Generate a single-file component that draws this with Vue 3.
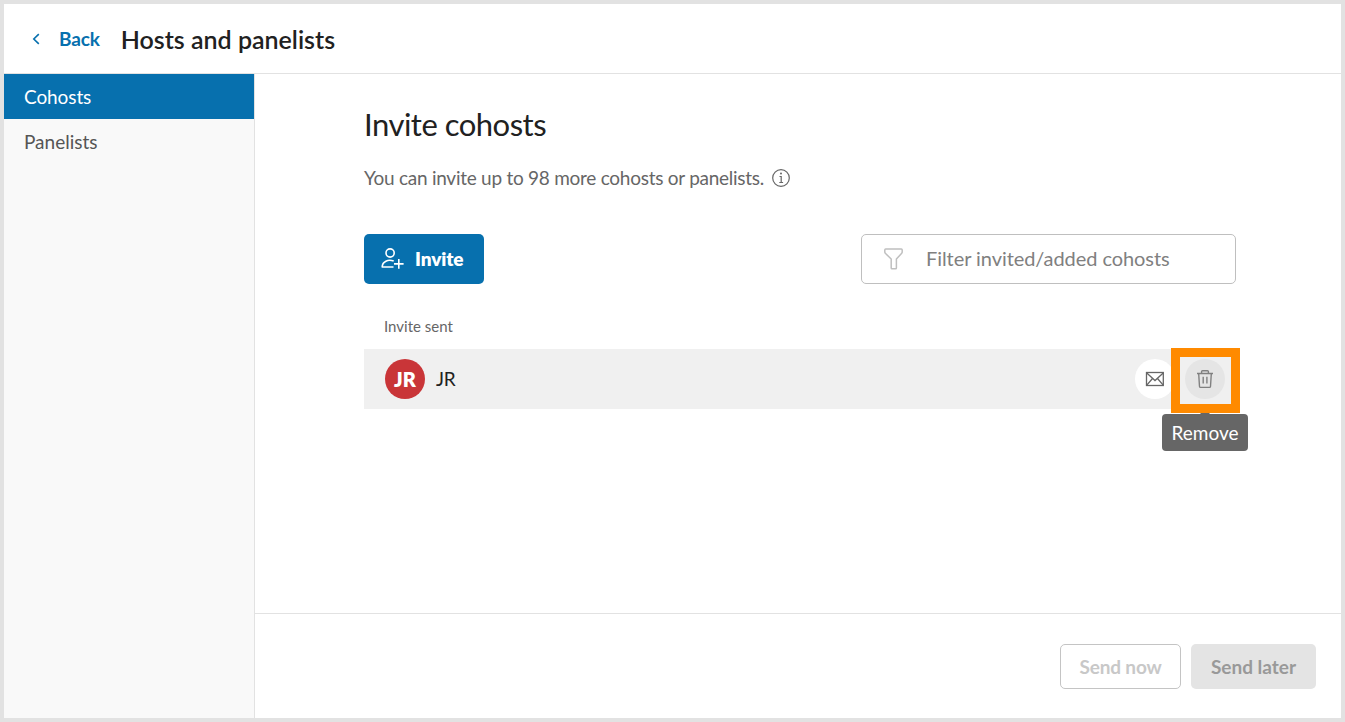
<template>
  <div class="window">
    <header class="header">
      <a class="back">
        <svg width="8" height="12" viewBox="0 0 8 12" fill="none" stroke="currentColor" stroke-width="1.6">
          <path d="M6.8 1.1 1.8 6l5 4.9" />
        </svg>
        <span>Back</span>
      </a>
      <h1 class="title">Hosts and panelists</h1>
    </header>

    <div class="body">
      <nav class="sidebar">
        <a
          v-for="tab in tabs"
          :key="tab"
          class="tab"
          :class="{ active: tab === activeTab }"
          @click="activeTab = tab"
        >{{ tab }}</a>
      </nav>

      <main class="main">
        <section class="content">
          <h2 class="heading">Invite cohosts</h2>
          <p class="hint">
            <span>You can invite up to {{ remaining }} more cohosts or panelists.</span>
            <svg width="18" height="18" viewBox="0 0 18 18" fill="none" stroke="currentColor" stroke-width="1.2">
              <circle cx="9" cy="9" r="8.3" />
              <path d="M7.5 7.5H9.2V13.5M7.3 13.5h3.8" />
              <circle cx="9" cy="4.5" r="1" fill="currentColor" stroke="none" />
            </svg>
          </p>

          <div class="toolbar">
            <button type="button" class="btn-invite">
              <svg width="23" height="22" viewBox="0 0 23 22" fill="none" stroke="currentColor" stroke-width="1.6">
                <circle cx="9.1" cy="5" r="4.1" />
                <path d="M12.7 13.1C7.2 11 1.2 13.4 1.2 19H12.5" stroke-linejoin="round" />
                <path d="M17.8 11v9.8M13 15.9h9.6" />
              </svg>
              <span>Invite</span>
            </button>
            <label class="filter">
              <svg width="19" height="22" viewBox="0 0 19 22" fill="none" stroke="currentColor" stroke-width="1.5" stroke-linejoin="round">
                <path d="M1.7 1h15.6q.9 0 .9.9v2.2q0 .7-.5 1.2L12.4 11v9q0 .8-.8.8H8q-.8 0-.8-.8v-9L1.3 5.3Q.8 4.8.8 4.1V1.9Q.8 1 1.7 1Z" />
              </svg>
              <input v-model="filter" type="text" placeholder="Filter invited/added cohosts" />
            </label>
          </div>

          <h3 class="list-title">Invite sent</h3>
          <div v-for="person in invited" :key="person.name" class="row">
            <span class="avatar">{{ person.initials }}</span>
            <span class="name">{{ person.name }}</span>
            <button type="button" class="icon-btn mail">
              <svg width="20" height="16" viewBox="0 0 20 16" fill="none" stroke="currentColor" stroke-width="1.3">
                <rect x="1.5" y="1.5" width="16.8" height="13" />
                <path d="M1.8 2 10 9.5 18.2 2M1.8 14.2 7.5 7.5M18.2 14.2l-5.7-6.7" />
              </svg>
            </button>
            <button type="button" class="icon-btn remove">
              <svg width="18" height="20" viewBox="0 0 18 20" fill="none" stroke="currentColor" stroke-width="1.4">
                <path d="M1 4.5h16M5.6 4.4V2.6q0-.9.9-.9h5q.9 0 .9.9v1.8M2.7 4.8l.8 12.7q.1.9 1 .9h9q.9 0 1-.9l.8-12.7M7.2 7.8v6.8M10.9 7.8v6.8" />
              </svg>
              <span class="tooltip">Remove</span>
              <span class="marker"></span>
            </button>
          </div>
        </section>

        <footer class="footer">
          <button type="button" class="btn btn-outline" disabled>Send now</button>
          <button type="button" class="btn btn-filled" disabled>Send later</button>
        </footer>
      </main>
    </div>
  </div>
</template>

<script setup>
import { ref } from 'vue'

const tabs = ['Cohosts', 'Panelists']
const activeTab = ref('Cohosts')
const remaining = ref(98)
const filter = ref('')
const invited = ref([{ name: 'JR', initials: 'JR' }])
</script>

<style>
body {
  margin: 0;
  overflow: hidden;
}
</style>

<style scoped>
* {
  box-sizing: border-box;
}

.window {
  display: flex;
  flex-direction: column;
  height: 722px;
  border: 4px solid #e2e2e2;
  background: #fff;
  color: #212121;
  font-family: Lato, "Liberation Sans", sans-serif;
  font-size: 19px;
  line-height: 24px;
}

button,
input {
  font: inherit;
}

.header {
  display: flex;
  align-items: center;
  height: 70px;
  padding-left: 28px;
  border-bottom: 1px solid #e2e2e2;
}

.back {
  display: flex;
  align-items: center;
  gap: 19px;
  margin-right: 21px;
  color: #0770ae;
  font-weight: 700;
  letter-spacing: -0.15px;
}

.title {
  margin: 0;
  font-size: 25px;
  font-weight: 600;
}

.body {
  display: flex;
  flex: 1;
  min-height: 0;
}

.sidebar {
  width: 251px;
  border-right: 1px solid #e2e2e2;
  background: #f9f9f9;
}

.tab {
  display: flex;
  align-items: center;
  height: 45px;
  padding-left: 20px;
  color: #555;
}

.tab.active {
  background: #0770ae;
  color: #fff;
  letter-spacing: -0.1px;
}

.main {
  display: flex;
  flex: 1;
  flex-direction: column;
}

.content {
  flex: 1;
  padding: 30px 105px 0 109px;
}

.heading {
  margin: 0;
  font-size: 31px;
  font-weight: 400;
  line-height: 40px;
  letter-spacing: -0.5px;
}

.hint {
  display: flex;
  align-items: center;
  gap: 8px;
  margin: 22px 0 44px;
  color: #666;
  letter-spacing: -0.26px;
}

.toolbar {
  display: flex;
  justify-content: space-between;
}

.btn-invite {
  display: flex;
  align-items: center;
  gap: 11px;
  width: 120px;
  height: 50px;
  padding: 0 0 0 17px;
  border: 0;
  border-radius: 5px;
  background: #0770ae;
  color: #fff;
  font-weight: 800;
  letter-spacing: -0.1px;
}

.filter {
  display: flex;
  align-items: center;
  width: 375px;
  height: 50px;
  padding-left: 22px;
  border: 1px solid #bfbfbf;
  border-radius: 5px;
  color: #bfbfbf;
}

.filter input {
  flex: 1;
  min-width: 0;
  margin-left: 23px;
  padding: 0 0 2px;
  border: 0;
  outline: 0;
  font-size: 20px;
  letter-spacing: -0.06px;
}

.filter input::placeholder {
  color: #808080;
}

.list-title {
  margin: 30px 0 10px 20px;
  color: #666;
  font-size: 15px;
  font-weight: 400;
  line-height: 25px;
}

.row {
  display: flex;
  align-items: center;
  height: 60px;
  padding: 0 11px 0 21px;
  background: #f0f0f0;
}

.avatar {
  display: flex;
  align-items: center;
  justify-content: center;
  width: 40px;
  height: 40px;
  border-radius: 50%;
  background: #c93538;
  color: #fff;
  font-size: 20px;
  font-weight: 800;
}

.name {
  flex: 1;
  margin-left: 11px;
  letter-spacing: -0.3px;
}

.icon-btn {
  position: relative;
  display: flex;
  align-items: center;
  justify-content: center;
  width: 40px;
  height: 40px;
  padding: 0;
  border: 0;
  border-radius: 50%;
  background: #fff;
  color: #666;
}

.icon-btn.remove {
  margin-left: 10px;
  background: #e5e5e5;
  color: #808080;
}

.tooltip {
  position: absolute;
  top: 55px;
  left: -23px;
  width: 86px;
  height: 37px;
  border-radius: 4px;
  background: #666;
  color: #fff;
  line-height: 37px;
  text-align: center;
}

.tooltip::before {
  content: '';
  position: absolute;
  top: -5px;
  left: 38px;
  border: 5px solid transparent;
  border-top: 0;
  border-bottom-color: #666;
}

.marker {
  position: absolute;
  top: -11px;
  left: -14px;
  width: 69px;
  height: 65px;
  border: 9px solid #ff8a00;
}

.footer {
  display: flex;
  justify-content: flex-end;
  gap: 10px;
  height: 105px;
  padding: 30px 25px 0 0;
  border-top: 1px solid #e2e2e2;
}

.btn {
  height: 45px;
  padding: 0;
  border-radius: 5px;
  font-weight: 700;
}

.btn-outline {
  width: 121px;
  border: 1px solid #c4c4c4;
  background: #fff;
  color: #c8c8c8;
  letter-spacing: -0.15px;
}

.btn-filled {
  width: 125px;
  border: 0;
  background: #e4e4e4;
  color: #999;
}
</style>
